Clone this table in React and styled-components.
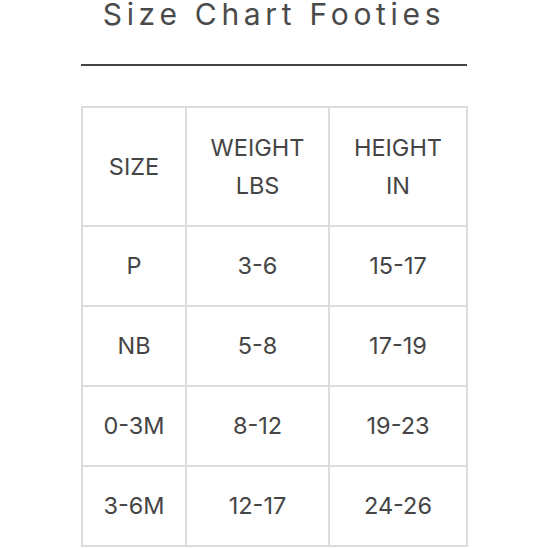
import React from 'react';
import styled, {createGlobalStyle} from 'styled-components';

const GlobalStyle = createGlobalStyle`
    html, body {
        margin: 0;
        padding: 0;
        background: #fff;
    }
    body {
        font-family: "Inter", "Liberation Sans", sans-serif;
        color: #454545;
    }
`;

const Page = styled.div`
    width: 386px;
    margin: 0 auto;
`;

const Title = styled.h1`
    margin: 0;
    font-size: 30px;
    font-weight: 400;
    letter-spacing: 4.7px;
    line-height: 28px;
    text-align: center;
    color: #4a4a4a;
`;

const Rule = styled.hr`
    border: none;
    border-top: 2px solid #444;
    margin: 36px 0 0 0;
`;

const Table = styled.table`
    margin-top: 40px;
    width: 385px;
    border-collapse: collapse;
    table-layout: fixed;
`;

const Cell = styled.td`
    border: 2px solid #dcdcdc;
    text-align: center;
    vertical-align: middle;
    font-size: 23.5px;
    line-height: 38px;
    height: ${(p) => (p.$head ? 117 : 78)}px;
    padding: 0;
    color: #454545;
`;

const rows = [
    ['P', '3-6', '15-17'],
    ['NB', '5-8', '17-19'],
    ['0-3M', '8-12', '19-23'],
    ['3-6M', '12-17', '24-26'],
];

const App = () => {
    return <Page>
        <GlobalStyle />
        <Title>Size Chart Footies</Title>
        <Rule />
        <Table>
            <colgroup>
                <col style={{width: '104px'}} />
                <col style={{width: '143px'}} />
                <col style={{width: '138px'}} />
            </colgroup>
            <tbody>
                <tr>
                    <Cell $head>SIZE</Cell>
                    <Cell $head>WEIGHT<br />LBS</Cell>
                    <Cell $head>HEIGHT<br />IN</Cell>
                </tr>
                {rows.map((r) => (
                    <tr key={r[0]}>
                        {r.map((v, i) => <Cell key={i}>{v}</Cell>)}
                    </tr>
                ))}
            </tbody>
        </Table>
    </Page>
}

export default App;
